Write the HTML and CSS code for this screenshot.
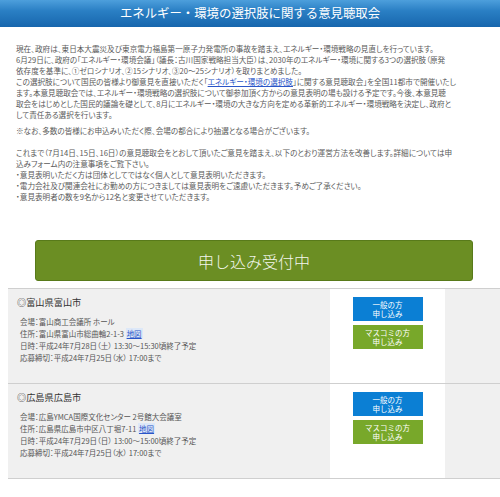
FILE: index.html
```html
<!DOCTYPE html>
<html lang="ja">
<head>
<meta charset="utf-8">
<link rel="stylesheet" href="styles.css">
</head>
<body>
<div class="header"><h1 class="title">エネルギー・環境の選択肢に関する意見聴取会</h1></div>
<div class="intro">
  <p class="para">現在、政府は、東日本大震災及び東京電力福島第一原子力発電所の事故を踏まえ、エネルギー・環境戦略の見直しを行っています。<br>6月29日に、政府の「エネルギー・環境会議」（議長：古川国家戦略担当大臣）は、2030年のエネルギー・環境に関する3つの選択肢（原発<br>依存度を基準に、①ゼロシナリオ、②15シナリオ、③20～25シナリオ）を取りまとめました。<br>この選択肢について国民の皆様より御意見を直接いただく「<a class="link" href="#">エネルギー・環境の選択肢</a>」に関する意見聴取会」を全国11都市で開催いたし<br>ます。本意見聴取会では、エネルギー・環境戦略の選択肢について御参加頂く方からの意見表明の場も設ける予定です。今後、本意見聴<br>取会をはじめとした国民的議論を礎として、8月にエネルギー・環境の大きな方向を定める革新的エネルギー・環境戦略を決定し、政府と<br>して責任ある選択を行います。</p>
  <p class="note">※なお、多数の皆様にお申込みいただく際、会場の都合により抽選となる場合がございます。</p>
  <p class="para2">これまで（7月14日、15日、16日）の意見聴取会をとおして頂いたご意見を踏まえ、以下のとおり運営方法を改善します。詳細については申<br>込みフォーム内の注意事項をご覧下さい。<br>・意見表明いただく方は団体としてではなく個人として意見表明いただきます。<br>・電力会社及び関連会社にお勤めの方につきましては意見表明をご遠慮いただきます。予めご了承ください。<br>・意見表明者の数を9名から12名と変更させていただきます。</p>
</div>
<div class="banner">申し込み受付中</div>
<div class="events">
  <div class="card">
    <div class="info">
      <h2 class="place">◎富山県富山市</h2>
      <ul class="details">
        <li>会場：富山商工会議所 ホール</li>
        <li>住所：富山県富山市総曲輪2-1-3 <a class="map" href="#">地図</a></li>
        <li>日時：平成24年7月28日（土） 13:30～15:30頃終了予定</li>
        <li>応募締切：平成24年7月25日（水） 17:00まで</li>
      </ul>
    </div>
    <div class="actions">
      <a class="btn btn-blue" href="#">一般の方<br>申し込み</a>
      <a class="btn btn-green" href="#">マスコミの方<br>申し込み</a>
    </div>
    <div class="rest"></div>
  </div>
  <div class="card">
    <div class="info">
      <h2 class="place">◎広島県広島市</h2>
      <ul class="details">
        <li>会場：広島YMCA国際文化センター 2号館大会議室</li>
        <li>住所：広島県広島市中区八丁堀7-11 <a class="map" href="#">地図</a></li>
        <li>日時：平成24年7月29日（日） 13:00～15:00頃終了予定</li>
        <li>応募締切：平成24年7月25日（水） 17:00まで</li>
      </ul>
    </div>
    <div class="actions">
      <a class="btn btn-blue" href="#">一般の方<br>申し込み</a>
      <a class="btn btn-green" href="#">マスコミの方<br>申し込み</a>
    </div>
    <div class="rest"></div>
  </div>
</div>
</body>
</html>
```
FILE: styles.css
```css
html, body {
  margin: 0;
  padding: 0;
  background: #ffffff;
  font-family: "Noto Sans CJK JP", "Noto Sans", sans-serif;
  overflow: hidden;
}
.header {
  height: 27px;
  background: linear-gradient(#4d9fdc 0%, #2a7fc4 40%, #1766ad 100%);
  display: flex;
  align-items: center;
  justify-content: center;
}
.title {
  margin: 0;
  color: #ffffff;
  font-size: 12.4px;
  font-weight: 400;
  line-height: 27px;
}
.intro {
  padding: 16px 0 0 16px;
  color: #5a5a5a;
  font-size: 7.6px;
  line-height: 11px;
  font-feature-settings: "palt";
  white-space: nowrap;
}
.intro p { margin: 0; }
.note { margin-top: 5px !important; }
.para2 { margin-top: 11px !important; }
.link {
  color: #2a55c8;
  text-decoration: underline;
}
.banner {
  margin: 38px 27px 0 35px;
  height: 41px;
  box-sizing: border-box;
  background: #6b8e23;
  border: 1px solid #587a1a;
  border-radius: 3px;
  color: #f4f7ee;
  font-size: 16px;
  font-weight: 300;
  display: flex;
  align-items: center;
  justify-content: center;
}
.events {
  margin: 7px 0 0 8px;
}
.card {
  display: grid;
  grid-template-columns: 322px 115px 1fr;
  height: 94px;
  border-top: 1px solid #cfcfcf;
  background: #f0f0f0;
}
.card:last-child {
  border-bottom: 1px solid #cfcfcf;
}
.info {
  padding: 6px 0 0 9px;
}
.place {
  margin: 0;
  font-size: 9.2px;
  font-weight: 400;
  color: #333333;
  line-height: 14px;
  font-feature-settings: "palt";
}
.details {
  list-style: none;
  margin: 7px 0 0 3px;
  padding: 0;
  font-size: 7.5px;
  line-height: 12px;
  color: #555555;
  font-feature-settings: "palt";
  white-space: nowrap;
}
.map {
  color: #2a55c8;
  text-decoration: underline;
  background: #dde8f8;
  padding: 0 1px;
}
.actions {
  background: #ffffff;
  display: flex;
  flex-direction: column;
  align-items: center;
  gap: 4px;
  padding-top: 8px;
}
.btn {
  display: flex;
  align-items: center;
  justify-content: center;
  text-align: center;
  width: 70px;
  height: 24px;
  color: #ffffff;
  text-decoration: none;
  font-size: 7.5px;
  line-height: 9.5px;
}
.btn-blue { background: #0b7fd4; }
.btn-green { background: #78a82a; }
.rest { background: #f0f0f0; }
```
